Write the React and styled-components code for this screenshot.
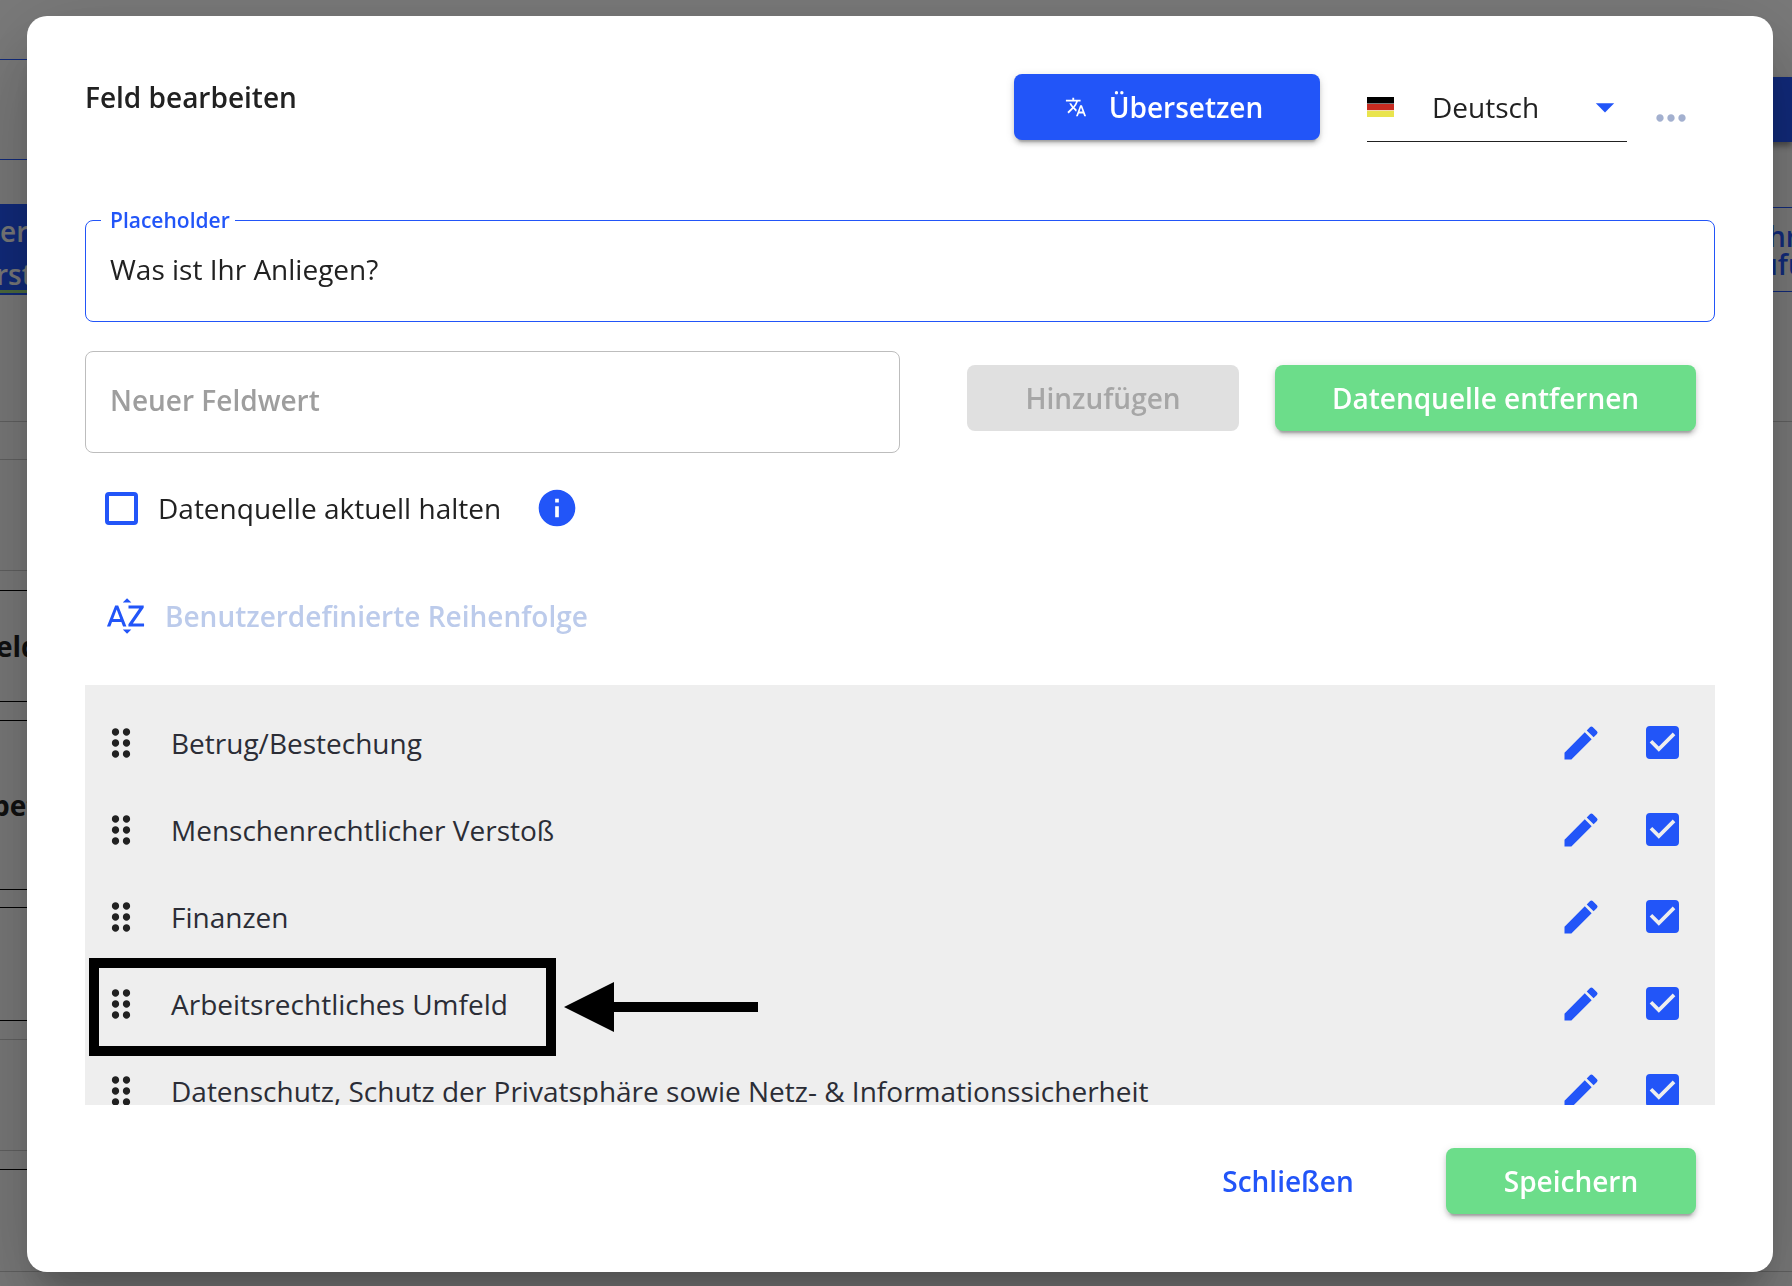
import React, { useState } from "react";
import styled, { createGlobalStyle, css } from "styled-components";
import {
  MdArrowDropDown,
  MdDragIndicator,
  MdEdit,
  MdInfo,
  MdMoreHoriz,
  MdSortByAlpha,
  MdTranslate,
} from "react-icons/md";

const BLUE = "#2255f8";
const GREEN = "#6cdd8a";
const INK = "#212121";

const GlobalStyle = createGlobalStyle`
  *, *::before, *::after { box-sizing: border-box; }
  body {
    margin: 0;
    background: #f5f5f5;
    color: ${INK};
    font-family: "Open Sans", sans-serif;
    font-size: 28px;
    line-height: 36px;
  }
  button, input, select { font: inherit; color: inherit; }
`;

/* ---------- page behind the dialog ---------- */

const Page = styled.div`
  height: 100vh;
  overflow: hidden;
  display: flex;
  justify-content: space-between;
`;

const Rail = styled.div`
  width: 60px;
  flex: none;
  display: flex;
  flex-direction: column;
`;

const Block = styled.div`
  flex: none;
  height: ${(p) => p.$height}px;
  border-top: ${(p) => (p.$line ? `1px solid ${p.$line}` : "0")};
  display: flex;
  align-items: center;
  font-weight: 700;
`;

const RailText = styled.div`
  margin-left: ${(p) => p.$indent}px;
`;

const ActiveTab = styled.div`
  flex: none;
  height: 91px;
  padding-top: 6px;
  background: ${BLUE};
  border-bottom: 2px solid ${BLUE};
  box-shadow: inset 0 -3px 0 #9bd67c;
  color: #f5f5f5;
  font-weight: 600;
  line-height: 43px;
`;

const TopAction = styled.div`
  flex: none;
  height: 65px;
  margin-top: 77px;
  background: ${BLUE};
  box-shadow: 0 4px 6px rgba(0, 0, 0, 0.4);
`;

const OutlineAction = styled.div`
  flex: none;
  height: 85px;
  margin: 65px 0 129px;
  padding-top: 14px;
  border: solid ${BLUE};
  border-width: 1px 0;
  color: ${BLUE};
  font-weight: 600;
  line-height: 28px;
`;

/* ---------- dialog ---------- */

const Backdrop = styled.div`
  position: fixed;
  inset: 0;
  padding: 16px 19px 14px 27px;
  background: rgba(0, 0, 0, 0.5);
  display: flex;
`;

const Dialog = styled.form`
  flex: 1;
  min-width: 0;
  padding: 58px;
  border-radius: 20px;
  background: #fff;
  box-shadow:
    0 22px 30px -14px rgba(0, 0, 0, 0.2),
    0 48px 76px 6px rgba(0, 0, 0, 0.14),
    0 18px 92px 16px rgba(0, 0, 0, 0.12);
  display: flex;
  flex-direction: column;
`;

const Header = styled.header`
  display: flex;
  align-items: flex-start;
  margin-bottom: 58px;
`;

const Title = styled.h2`
  flex: 1;
  margin: 0;
  font-size: 28px;
  font-weight: 600;
  line-height: 46px;
`;

const variants = {
  primary: css`
    background: ${BLUE};
    color: #fff;
  `,
  success: css`
    background: ${GREEN};
    color: #fff;
  `,
  text: css`
    background: transparent;
    color: ${BLUE};
    box-shadow: none;
  `,
};

const Button = styled.button`
  height: 66px;
  min-width: ${(p) => p.$width}px;
  padding: 0 24px;
  border: 0;
  border-radius: 8px;
  font-weight: 600;
  white-space: nowrap;
  display: flex;
  align-items: center;
  justify-content: center;
  gap: 22px;
  cursor: pointer;
  box-shadow:
    0 6px 2px -4px rgba(0, 0, 0, 0.2),
    0 4px 4px rgba(0, 0, 0, 0.14),
    0 2px 10px rgba(0, 0, 0, 0.12);
  ${(p) => variants[p.$variant]}
  svg {
    margin-left: -6px;
  }
  &:disabled {
    background: #e0e0e0;
    color: #a6a6a6;
    box-shadow: none;
    cursor: default;
  }
`;

const LanguagePicker = styled.div`
  width: 260px;
  height: 68px;
  margin-left: 47px;
  padding-bottom: 2px;
  border-bottom: 1px solid ${INK};
  display: flex;
  align-items: center;
  svg:last-child {
    flex: none;
    color: ${BLUE};
  }
`;

const LanguageSelect = styled.select`
  flex: 1;
  min-width: 0;
  height: 64px;
  padding: 0 0 0 38px;
  border: 0;
  outline: 0;
  background: transparent;
  appearance: none;
`;

const IconButton = styled.button`
  flex: none;
  width: ${(p) => p.$size}px;
  height: ${(p) => p.$size}px;
  padding: 0;
  border: 0;
  background: transparent;
  color: ${(p) => p.$color || BLUE};
  display: flex;
  align-items: center;
  justify-content: center;
  cursor: pointer;
`;

const Field = styled.div`
  position: relative;
  width: ${(p) => p.$width || "100%"};
`;

const FloatingLabel = styled.label`
  position: absolute;
  top: -12px;
  left: 16px;
  padding: 0 5px 0 9px;
  background: #fff;
  color: ${BLUE};
  font-size: 21px;
  font-weight: 600;
  line-height: 24px;
`;

const TextInput = styled.input`
  display: block;
  width: 100%;
  height: 102px;
  padding: 0 24px 4px;
  border: 1px solid ${(p) => (p.$active ? BLUE : "#bdbdbd")};
  border-radius: 8px;
  outline: 0;
  background: #fff;
  &::placeholder {
    color: #9e9e9e;
    font-weight: 600;
    opacity: 1;
  }
`;

const AddRow = styled.div`
  margin-top: 29px;
  display: flex;
  justify-content: space-between;
`;

const Actions = styled.div`
  padding: 14px 19px 0 0;
  display: flex;
  gap: 36px;
`;

const OptionRow = styled.div`
  flex: none;
  height: 88px;
  margin-top: 11px;
  padding-left: 20px;
  display: flex;
  align-items: center;
`;

const CheckLabel = styled.label`
  display: flex;
  align-items: center;
  gap: 20px;
  margin-right: 34px;
`;

const BoxWrap = styled.span`
  flex: none;
  width: 33px;
  height: 33px;
  display: grid;
  > * {
    grid-area: 1 / 1;
  }
  svg {
    pointer-events: none;
  }
`;

const Box = styled.input.attrs({ type: "checkbox" })`
  width: 33px;
  height: 33px;
  margin: 0;
  border: 4px solid ${BLUE};
  border-radius: 4px;
  appearance: none;
  &:checked {
    background: ${BLUE};
  }
`;

const SortButton = styled.button`
  align-self: flex-start;
  height: 88px;
  margin: 20px 0 25px;
  padding: 0 19px;
  border: 0;
  background: transparent;
  color: #bccbeb;
  font-weight: 600;
  display: flex;
  align-items: center;
  gap: 17px;
  svg {
    color: ${BLUE};
  }
`;

const List = styled.ul`
  flex: 1;
  min-height: 0;
  margin: 0;
  padding: 14px 0 0;
  overflow-y: auto;
  scrollbar-width: none;
  background: #eee;
  list-style: none;
`;

const Item = styled.li`
  position: relative;
  height: 87px;
  padding: 0 36px 0 14px;
  display: flex;
  align-items: center;
  color: #2b2d36;
`;

const Handle = styled(MdDragIndicator)`
  flex: none;
  color: ${INK};
`;

const ItemText = styled.span`
  flex: 1;
  margin-left: 28px;
`;

const ItemActions = styled.span`
  display: flex;
  align-items: center;
  gap: 43px;
`;

const Highlight = styled.span`
  position: absolute;
  top: -2px;
  left: 4px;
  width: 467px;
  height: 98px;
  border: 10px solid #000;
  pointer-events: none;
`;

const Arrow = styled.svg`
  position: absolute;
  top: 22px;
  left: 479px;
  pointer-events: none;
`;

const Footer = styled.footer`
  flex: none;
  margin-top: 43px;
  padding-right: 19px;
  display: flex;
  justify-content: flex-end;
  gap: 34px;
`;

function Flag() {
  return (
    <svg width="27" height="20" viewBox="0 0 27 20" aria-hidden="true">
      <rect width="27" height="6" fill="#000" />
      <rect y="6" width="27" height="1" fill="#777" />
      <rect y="7" width="27" height="6" fill="#c62b20" />
      <rect y="13" width="27" height="1" fill="#f3dcae" />
      <rect y="14" width="27" height="6" fill="#e9e44d" />
    </svg>
  );
}

function CheckBox({ id, checked, onChange, label }) {
  return (
    <BoxWrap>
      <Box id={id} checked={checked} onChange={onChange} aria-label={label} />
      {checked && (
        <svg width="33" height="33" viewBox="3 3 18 18" aria-hidden="true">
          <path d="M10 17l-5-5 1.41-1.41L10 14.17l7.59-7.59L19 8z" fill="#eee" />
        </svg>
      )}
    </BoxWrap>
  );
}

const OPTIONS = [
  "Betrug/Bestechung",
  "Menschenrechtlicher Verstoß",
  "Finanzen",
  "Arbeitsrechtliches Umfeld",
  "Datenschutz, Schutz der Privatsphäre sowie Netz- & Informationssicherheit",
];

const MARKED = "Arbeitsrechtliches Umfeld";

export default function App() {
  const [placeholder, setPlaceholder] = useState("Was ist Ihr Anliegen?");
  const [value, setValue] = useState("");
  const [sync, setSync] = useState(false);
  const [off, setOff] = useState({});

  return (
    <>
      <GlobalStyle />
      <Page aria-hidden="true">
        <Rail>
          <Block $height={59} />
          <Block $height={100} $line={BLUE} />
          <Block $height={45} $line={BLUE} />
          <ActiveTab>
            <RailText $indent={0}>er</RailText>
            <RailText $indent={-4}>rst</RailText>
          </ActiveTab>
          <Block $height={126} />
          <Block $height={38} $line="#c4c4c4" />
          <Block $height={111} $line="#c4c4c4" />
          <Block $height={20} $line="#c4c4c4" />
          <Block $height={111} $line="#000">
            <RailText $indent={-4}>eld</RailText>
          </Block>
          <Block $height={19} $line="#000" />
          <Block $height={169} $line="#000">
            <RailText $indent={-8}>bet</RailText>
          </Block>
          <Block $height={18} $line="#000" />
          <Block $height={113} $line="#000" />
          <Block $height={19} $line="#000" />
          <Block $height={111} $line="#c4c4c4" />
          <Block $height={19} $line="#c4c4c4" />
          <Block $height={102} $line="#000" />
          <Block $height={15} $line="#c4c4c4" />
        </Rail>
        <Rail>
          <TopAction />
          <OutlineAction>
            <RailText $indent={36}>hr</RailText>
            <RailText $indent={28}>ufü</RailText>
          </OutlineAction>
          <Block $height={850} $line="#c4c4c4" />
          <Block $height={15} $line="#c4c4c4" />
        </Rail>
      </Page>

      <Backdrop>
        <Dialog
          role="dialog"
          aria-labelledby="dialog-title"
          onSubmit={(e) => e.preventDefault()}
        >
          <Header>
            <Title id="dialog-title">Feld bearbeiten</Title>
            <Button type="button" $variant="primary" $width={306}>
              <MdTranslate size={22} />
              Übersetzen
            </Button>
            <LanguagePicker>
              <Flag />
              <LanguageSelect aria-label="Sprache" defaultValue="de">
                <option value="de">Deutsch</option>
              </LanguageSelect>
              <MdArrowDropDown size={44} />
            </LanguagePicker>
            <IconButton type="button" aria-label="Mehr" $size={88} $color="#a3b0cf">
              <MdMoreHoriz size={44} />
            </IconButton>
          </Header>

          <Field>
            <FloatingLabel htmlFor="placeholder">Placeholder</FloatingLabel>
            <TextInput
              id="placeholder"
              $active
              value={placeholder}
              onChange={(e) => setPlaceholder(e.target.value)}
            />
          </Field>

          <AddRow>
            <Field $width="50%">
              <TextInput
                aria-label="Neuer Feldwert"
                placeholder="Neuer Feldwert"
                value={value}
                onChange={(e) => setValue(e.target.value)}
              />
            </Field>
            <Actions>
              <Button type="button" $variant="success" $width={272} disabled={!value}>
                Hinzufügen
              </Button>
              <Button type="button" $variant="success" $width={421}>
                Datenquelle entfernen
              </Button>
            </Actions>
          </AddRow>

          <OptionRow>
            <CheckLabel htmlFor="sync">
              <CheckBox
                id="sync"
                checked={sync}
                onChange={(e) => setSync(e.target.checked)}
              />
              Datenquelle aktuell halten
            </CheckLabel>
            <IconButton type="button" aria-label="Info" $size={44}>
              <MdInfo size={44} />
            </IconButton>
          </OptionRow>

          <SortButton type="button">
            <MdSortByAlpha size={44} />
            Benutzerdefinierte Reihenfolge
          </SortButton>

          <List>
            {OPTIONS.map((option) => (
              <Item key={option}>
                <Handle size={44} />
                <ItemText>{option}</ItemText>
                <ItemActions>
                  <IconButton type="button" aria-label="Bearbeiten" $size={44}>
                    <MdEdit size={44} />
                  </IconButton>
                  <CheckBox
                    label={option}
                    checked={!off[option]}
                    onChange={(e) => setOff({ ...off, [option]: !e.target.checked })}
                  />
                </ItemActions>
                {option === MARKED && (
                  <>
                    <Highlight />
                    <Arrow width="194" height="50" viewBox="0 0 194 50">
                      <path d="M0 25L50 0V20H194V30H50V50Z" fill="#000" />
                    </Arrow>
                  </>
                )}
              </Item>
            ))}
          </List>

          <Footer>
            <Button type="button" $variant="text" $width={248}>
              Schließen
            </Button>
            <Button type="submit" $variant="success" $width={250}>
              Speichern
            </Button>
          </Footer>
        </Dialog>
      </Backdrop>
    </>
  );
}
